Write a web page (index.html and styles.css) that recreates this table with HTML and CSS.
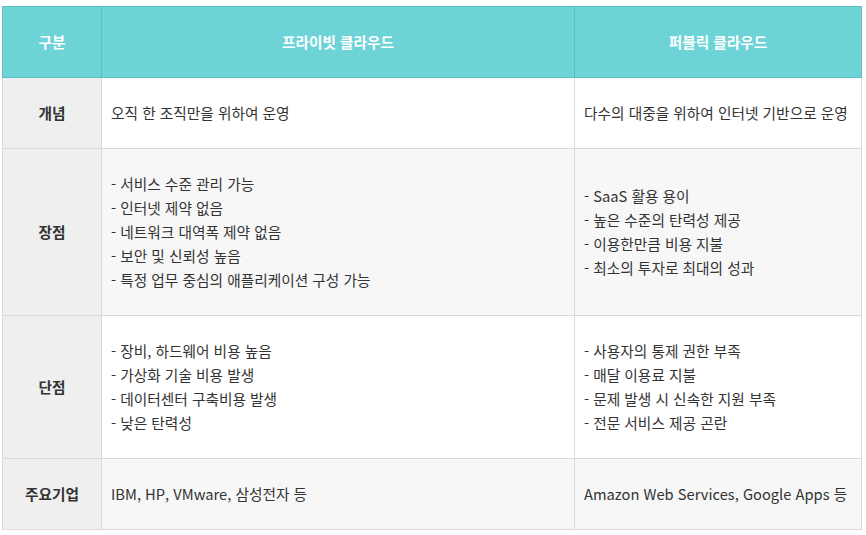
FILE: index.html
```html
<!DOCTYPE html>
<html lang="ko">
<head>
<meta charset="utf-8">
<link rel="stylesheet" href="styles.css">
</head>
<body>
<table class="cmp">
  <colgroup>
    <col class="c1">
    <col class="c2">
    <col class="c3">
  </colgroup>
  <thead>
    <tr>
      <th>구분</th>
      <th>프라이빗 클라우드</th>
      <th>퍼블릭 클라우드</th>
    </tr>
  </thead>
  <tbody>
    <tr class="odd">
      <th>개념</th>
      <td>오직 한 조직만을 위하여 운영</td>
      <td>다수의 대중을 위하여 인터넷 기반으로 운영</td>
    </tr>
    <tr class="even">
      <th>장점</th>
      <td>- 서비스 수준 관리 가능<br>- 인터넷 제약 없음<br>- 네트워크 대역폭 제약 없음<br>- 보안 및 신뢰성 높음<br>- 특정 업무 중심의 애플리케이션 구성 가능</td>
      <td>- SaaS 활용 용이<br>- 높은 수준의 탄력성 제공<br>- 이용한만큼 비용 지불<br>- 최소의 투자로 최대의 성과</td>
    </tr>
    <tr class="odd">
      <th>단점</th>
      <td>- 장비, 하드웨어 비용 높음<br>- 가상화 기술 비용 발생<br>- 데이터센터 구축비용 발생<br>- 낮은 탄력성</td>
      <td>- 사용자의 통제 권한 부족<br>- 매달 이용료 지불<br>- 문제 발생 시 신속한 지원 부족<br>- 전문 서비스 제공 곤란</td>
    </tr>
    <tr class="even">
      <th>주요기업</th>
      <td>IBM, HP, VMware, 삼성전자 등</td>
      <td>Amazon Web Services, Google Apps 등</td>
    </tr>
  </tbody>
</table>
</body>
</html>
```

FILE: styles.css
```css
html, body {
  margin: 0;
  padding: 0;
  background: #ffffff;
}
body {
  padding: 6px 0 0 2px;
  font-family: "Noto Sans CJK KR", "Noto Sans", sans-serif;
  font-size: 14.7px;
  color: #333333;
}
.cmp {
  border-collapse: collapse;
  table-layout: fixed;
  width: 859px;
}
.c1 { width: 99px; }
.c2 { width: 473px; }
.c3 { width: 287px; }
.cmp th, .cmp td {
  line-height: 24px;
  padding: 23px 9px;
  border: 1px solid #dadada;
  vertical-align: middle;
  text-align: left;
}
.cmp thead th {
  background: #6dd3d7;
  border-color: #5cbfc3;
  color: #ffffff;
  font-weight: 700;
  text-align: center;
}
.cmp tbody th {
  background: #efefef;
  font-weight: 700;
  text-align: center;
  color: #333333;
}
.cmp tr.odd td { background: #ffffff; }
.cmp tr.even td { background: #f7f7f7; }
```
